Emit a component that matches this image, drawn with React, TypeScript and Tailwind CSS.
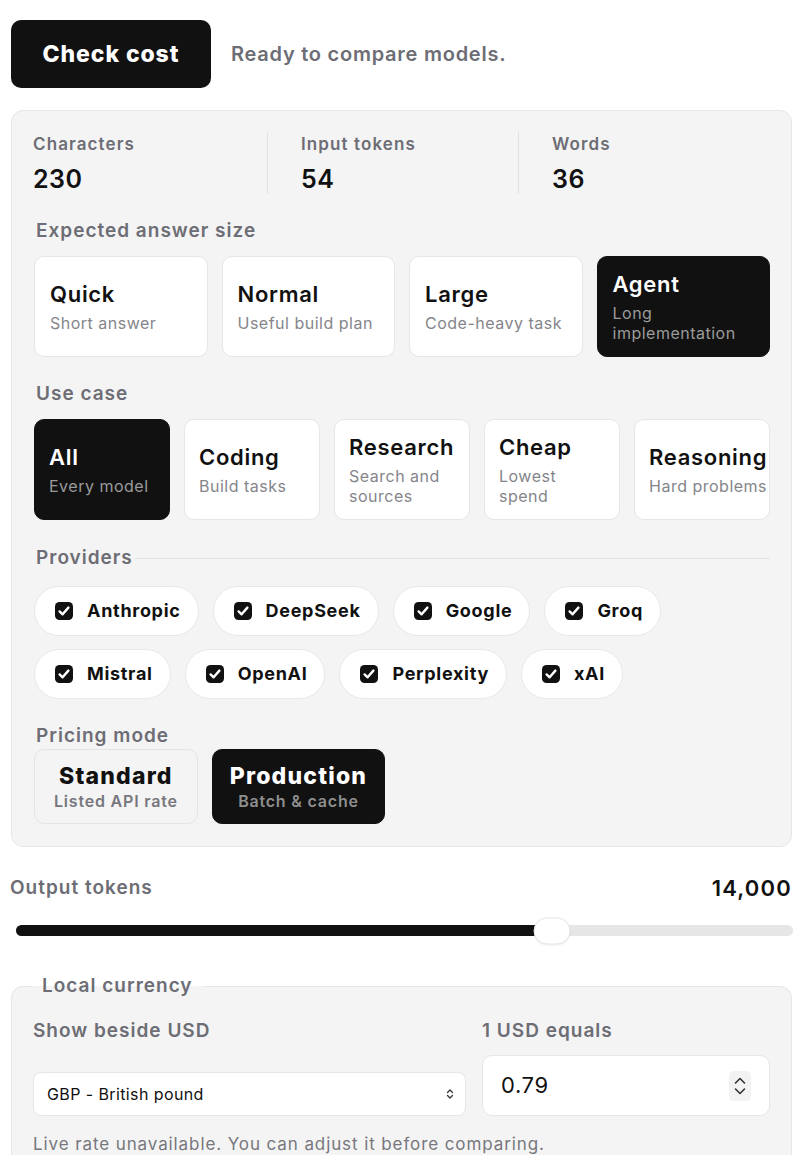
import React from "react";

const font = { fontFamily: "Inter, 'Noto Sans', sans-serif" };

function Check() {
  return (
    <svg width="18" height="18" viewBox="0 0 18 18" className="shrink-0">
      <rect x="0" y="0" width="18" height="18" rx="4.5" fill="#111111" />
      <path d="M4.6 9.4 L7.6 12.3 L13.4 5.6" fill="none" stroke="#ffffff" strokeWidth="2.4" strokeLinecap="round" strokeLinejoin="round" />
    </svg>
  );
}

const answer = [
  { t: "Quick", s: "Short answer" },
  { t: "Normal", s: "Useful build plan" },
  { t: "Large", s: "Code-heavy task" },
  { t: "Agent", s: "Long implementation", active: true },
];

const uses = [
  { t: "All", s: "Every model", active: true },
  { t: "Coding", s: "Build tasks" },
  { t: "Research", s: "Search and sources" },
  { t: "Cheap", s: "Lowest spend" },
  { t: "Reasoning", s: "Hard problems" },
];

const row1 = ["Anthropic", "DeepSeek", "Google", "Groq"];
const row2 = ["Mistral", "OpenAI", "Perplexity", "xAI"];

function Pill({ name }: { name: string }) {
  return (
    <div className="flex h-[50px] items-center gap-[14px] rounded-full border border-[#e8e8e8] bg-white pl-[20px] pr-[17px]">
      <Check />
      <span className="text-[18px] font-bold leading-none tracking-[0.7px] text-[#111]">{name}</span>
    </div>
  );
}

const label = "text-[19px] font-semibold leading-6 tracking-[1px] text-[#6d6d75]";

export default function App() {
  return (
    <div style={font} className="w-[800px] bg-white pl-[11px] pr-[8px] pt-[20px] text-[#111]">
      <div className="flex items-center gap-[20px]">
        <button className="flex h-[68px] w-[200px] items-center justify-center rounded-[10px] bg-[#111111] text-[23px] font-extrabold tracking-[0.9px] text-white">
          Check cost
        </button>
        <span className="text-[20px] font-semibold tracking-[0.75px] text-[#6d6d75]">Ready to compare models.</span>
      </div>

      <div className="mt-[22px] rounded-[12px] border border-[#e6e6e6] bg-[#f4f4f4] px-[21px] pb-[22px] pt-[21px]">
        <div className="grid grid-cols-[234px_251px_1fr]">
          <div className="flex flex-col">
            <span className="text-[17px] font-semibold leading-6 tracking-[1.1px] text-[#6d6d75]">Characters</span>
            <span className="mt-[8px] text-[25px] font-semibold leading-[30px] tracking-[0.5px] text-[#111]">230</span>
          </div>
          <div className="flex flex-col border-l border-[#e2e2e2] pl-[33px]">
            <span className="text-[17px] font-semibold leading-6 tracking-[1.1px] text-[#6d6d75]">Input tokens</span>
            <span className="mt-[8px] text-[25px] font-semibold leading-[30px] tracking-[0.5px] text-[#111]">54</span>
          </div>
          <div className="flex flex-col border-l border-[#e2e2e2] pl-[33px]">
            <span className="text-[17px] font-semibold leading-6 tracking-[1.1px] text-[#6d6d75]">Words</span>
            <span className="mt-[8px] text-[25px] font-semibold leading-[30px] tracking-[0.5px] text-[#111]">36</span>
          </div>
        </div>

        <div className={"mt-[25px] pl-[3px] " + label}>Expected answer size</div>
        <div className="mt-[13px] grid grid-cols-4 gap-[14px] pl-px">
          {answer.map((a) => (
            <div
              key={a.t}
              className={
                "flex h-[101px] flex-col justify-center rounded-[10px] border pl-[15px] pr-[8px] " +
                (a.active ? "border-[#111] bg-[#111111] text-white" : "border-[#e6e6e6] bg-white text-[#111]")
              }
            >
              <span className="text-[22px] font-semibold leading-[28px] tracking-[0.7px]">{a.t}</span>
              <span className={"mt-[5px] text-[16px] leading-[20px] tracking-[0.5px] " + (a.active ? "text-[#9b9b9b]" : "text-[#85858a]")}>
                {a.s}
              </span>
            </div>
          ))}
        </div>

        <div className={"mt-[25px] pl-[3px] " + label}>Use case</div>
        <div className="mt-[13px] grid grid-cols-5 gap-[14px] pl-px">
          {uses.map((a) => (
            <div
              key={a.t}
              className={
                "flex h-[101px] flex-col justify-center overflow-hidden rounded-[10px] border pl-[14px] " +
                (a.active ? "border-[#111] bg-[#111111] text-white" : "border-[#e6e6e6] bg-white text-[#111]")
              }
            >
              <span className="whitespace-nowrap text-[22px] font-semibold leading-[28px] tracking-[0.7px]">{a.t}</span>
              <span
                className={
                  "mt-[5px] text-[16px] leading-[20px] tracking-[0.5px] " +
                  (a.active ? "text-[#9b9b9b]" : "text-[#85858a]") +
                  (a.t === "Reasoning" ? " whitespace-nowrap" : " pr-[12px]")
                }
              >
                {a.s}
              </span>
            </div>
          ))}
        </div>

        <div className="mt-[26px] flex items-center gap-[2px] pl-[3px]">
          <span className={label}>Providers</span>
          <div className="h-px flex-1 bg-[#e2e2e2]" />
        </div>
        <div className="mt-[16px] flex flex-col gap-[13px] pl-px">
          <div className="flex gap-[14px]">
            {row1.map((p) => (
              <Pill key={p} name={p} />
            ))}
          </div>
          <div className="flex gap-[14px]">
            {row2.map((p) => (
              <Pill key={p} name={p} />
            ))}
          </div>
        </div>

        <div className={"mt-[25px] pl-[3px] " + label}>Pricing mode</div>
        <div className="mt-px flex gap-[14px] pl-px">
          <div className="flex h-[75px] flex-col items-center justify-center rounded-[10px] border border-[#e4e4e4] bg-[#f4f4f4] px-[19px]">
            <span className="text-[23px] font-extrabold leading-[28px] tracking-[1.2px] text-[#111]">Standard</span>
            <span className="mt-[1px] text-[16px] font-semibold leading-[20px] tracking-[0.8px] text-[#77777d]">Listed API rate</span>
          </div>
          <div className="flex h-[75px] flex-col items-center justify-center rounded-[10px] border border-[#111] bg-[#111111] px-[17px]">
            <span className="text-[23px] font-extrabold leading-[28px] tracking-[1.2px] text-white">Production</span>
            <span className="mt-[1px] text-[16px] font-semibold leading-[20px] tracking-[0.8px] text-[#8e8e8e]">Batch &amp; cache</span>
          </div>
        </div>
      </div>

      <div className="mt-[29px] flex items-center justify-between">
        <span className={"-ml-px " + label}>Output tokens</span>
        <span className="text-[22px] font-semibold leading-6 tracking-[1.2px] text-[#111]">14,000</span>
      </div>
      <div className="relative mt-[25px] ml-[5px] mr-[-1px] h-[11px] rounded-full bg-[#e6e6e6]">
        <div className="h-full w-[69%] rounded-full bg-[#111111]" />
        <div className="absolute left-[69%] top-1/2 h-[27px] w-[37px] -translate-x-1/2 -translate-y-1/2 rounded-full border border-[#e4e4e4] bg-white shadow-[0_1px_2px_rgba(0,0,0,0.06)]" />
      </div>

      <fieldset className="mt-[38px] rounded-[12px] border border-[#e6e6e6] bg-[#f4f4f4] px-[21px] pb-[10px]">
        <legend className={"pl-[9px] pr-[11px] " + label}>Local currency</legend>
        <div className="mt-[21px] grid grid-cols-[1fr_288px] gap-[16px]">
          <div className="flex flex-col justify-between">
            <span className={label}>Show beside USD</span>
            <div className="flex h-[44px] items-center justify-between rounded-[8px] border border-[#e6e6e6] bg-white pl-[13px] pr-[10px]">
              <span className="text-[16px] tracking-[0.4px] text-[#111]">GBP - British pound</span>
              <svg width="10" height="14" viewBox="0 0 10 14">
                <path d="M2.5 5.5 L5 3 L7.5 5.5 M2.5 8.5 L5 11 L7.5 8.5" fill="none" stroke="#333" strokeWidth="1.3" strokeLinecap="round" strokeLinejoin="round" />
              </svg>
            </div>
          </div>
          <div className="flex flex-col">
            <span className={label}>1 USD equals</span>
            <div className="mt-[12px] flex h-[61px] items-center justify-between rounded-[10px] border border-[#e6e6e6] bg-white pl-[18px] pr-[18px]">
              <span className="text-[22px] tracking-[0.6px] text-[#111]">0.79</span>
              <div className="flex h-[30px] w-[22px] items-center justify-center rounded-[5px] bg-[#f2f2f2]">
                <svg width="14" height="24" viewBox="0 0 14 24">
                  <path d="M2.5 9 L7 4.5 L11.5 9 M2.5 15 L7 19.5 L11.5 15" fill="none" stroke="#333" strokeWidth="1.6" strokeLinecap="round" strokeLinejoin="round" />
                </svg>
              </div>
            </div>
          </div>
        </div>
        <p className="mt-[17px] text-[17px] leading-[22px] tracking-[0.9px] text-[#77777d]">Live rate unavailable. You can adjust it before comparing.</p>
      </fieldset>
    </div>
  );
}
